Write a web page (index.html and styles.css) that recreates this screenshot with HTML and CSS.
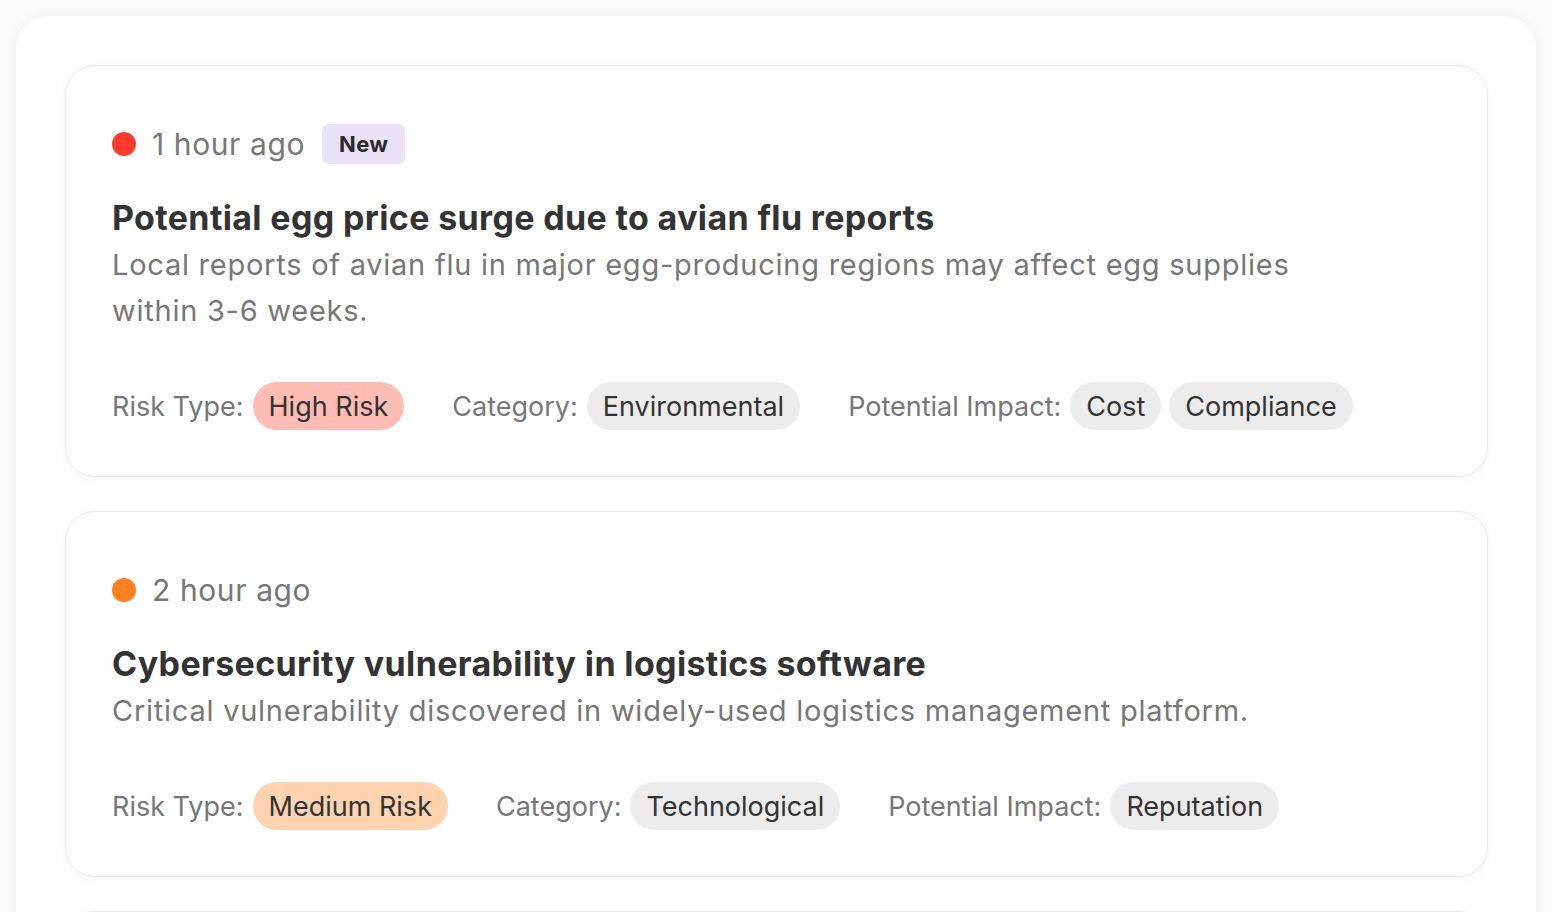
FILE: index.html
```html
<!DOCTYPE html>
<html lang="en">
<head>
<meta charset="utf-8">
<title>Risk alerts</title>
<link rel="stylesheet" href="styles.css">
</head>
<body>
<div class="panel">
  <div class="card">
    <div class="meta">
      <span class="dot dot-red"></span>
      <span class="time">1 hour ago</span>
      <span class="badge">New</span>
    </div>
    <h2 class="title">Potential egg price surge due to avian flu reports</h2>
    <p class="desc">Local reports of avian flu in major egg-producing regions may affect egg supplies within 3-6&nbsp;weeks.</p>
    <div class="tags">
      <div class="group"><span class="label">Risk Type:</span><span class="pill pill-high">High Risk</span></div>
      <div class="group"><span class="label">Category:</span><span class="pill">Environmental</span></div>
      <div class="group"><span class="label">Potential Impact:</span><span class="pill">Cost</span><span class="pill">Compliance</span></div>
    </div>
  </div>
  <div class="card">
    <div class="meta">
      <span class="dot dot-orange"></span>
      <span class="time">2 hour ago</span>
    </div>
    <h2 class="title">Cybersecurity vulnerability in logistics software</h2>
    <p class="desc">Critical vulnerability discovered in widely-used logistics management platform.</p>
    <div class="tags">
      <div class="group"><span class="label">Risk Type:</span><span class="pill pill-medium">Medium Risk</span></div>
      <div class="group"><span class="label">Category:</span><span class="pill">Technological</span></div>
      <div class="group"><span class="label">Potential Impact:</span><span class="pill">Reputation</span></div>
    </div>
  </div>
  <div class="card card-next"></div>
</div>
</body>
</html>
```
FILE: styles.css
```css
* { box-sizing: border-box; }
html, body { margin: 0; padding: 0; }
body {
  background: #fafafa;
  font-family: Inter, "Liberation Sans", sans-serif;
  color: #333;
  height: 912px;
  overflow: hidden;
}
.panel {
  margin: 16px;
  padding: 49px 48px 48px 49px;
  background: #fff;
  border-radius: 32px;
  box-shadow: 0 0 12px rgba(0,0,0,0.06);
  display: flex;
  flex-direction: column;
  gap: 34px;
}
.card {
  background: #fff;
  border: 1px solid #e9e9e9;
  border-radius: 30px;
  box-shadow: 0 2px 10px rgba(0,0,0,0.05);
  padding: 56px 46px 46px 46px;
}
.card-next { min-height: 200px; }
.meta {
  display: flex;
  align-items: center;
  height: 44px;
}
.dot {
  width: 24px;
  height: 24px;
  border-radius: 50%;
  margin-right: 16px;
}
.dot-red { background: #ff3b30; }
.dot-orange { background: #ff8020; }
.time {
  font-size: 30px;
  letter-spacing: 0.6px;
  color: #777;
}
.badge {
  margin-left: 17px;
  height: 40px;
  padding: 0 17px;
  display: flex;
  align-items: center;
  background: #e9e1f5;
  border-radius: 7px;
  font-size: 22px;
  letter-spacing: 0.3px;
  font-weight: 700;
  color: #2b2b2b;
}
.title {
  margin: 30px 0 0 0;
  font-size: 34px;
  letter-spacing: 0.35px;
  line-height: 44px;
  font-weight: 700;
  color: #333;
}
.desc {
  margin: 2px 0 0 0;
  font-size: 29px;
  letter-spacing: 0.75px;
  line-height: 46px;
  color: #777;
  max-width: 1220px;
}
.tags {
  margin-top: 48px;
  display: flex;
  align-items: center;
  gap: 48px;
}
.group {
  display: flex;
  align-items: center;
  gap: 8px;
}
.label {
  font-size: 27px;
  color: #777;
  margin-right: 1px;
}
.pill {
  height: 48px;
  padding: 0 16px;
  display: flex;
  align-items: center;
  border-radius: 24px;
  background: #ececec;
  font-size: 27px;
  color: #333;
}
.pill-high { background: #ffbcb4; }
.pill-medium { background: #ffd3b0; }
```
